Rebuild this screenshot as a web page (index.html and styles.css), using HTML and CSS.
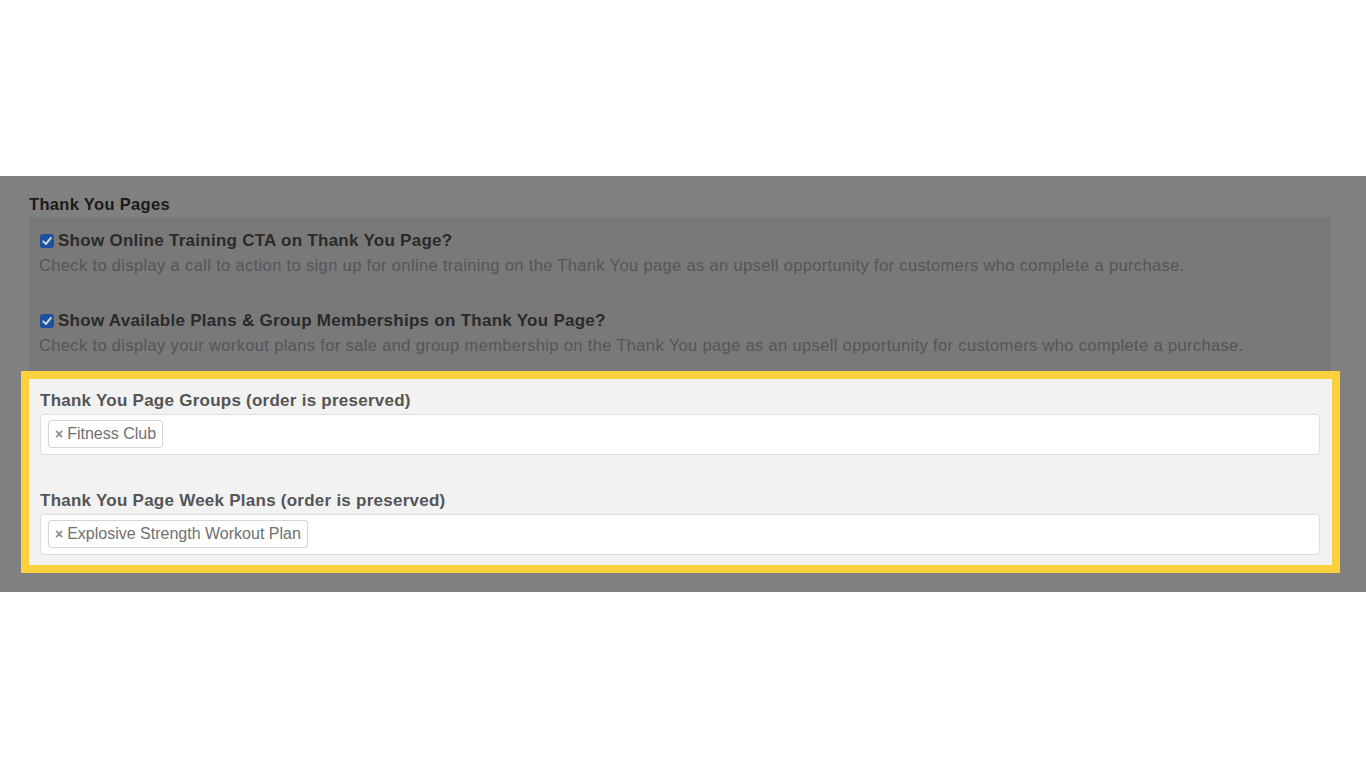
FILE: index.html
```html
<!DOCTYPE html>
<html lang="en">
<head>
<meta charset="utf-8">
<title>Thank You Pages</title>
<link rel="stylesheet" href="styles.css">
</head>
<body>
<div class="top-space"></div>
<section class="band">
  <h2 class="section-title">Thank You Pages</h2>
  <div class="panel">
    <div class="option">
      <div class="option-label">
        <span class="checkbox"><svg viewBox="0 0 14 14" width="14" height="14"><path d="M3.2 7.4 L5.9 10 L10.9 3.9" fill="none" stroke="#cfd3da" stroke-width="2" stroke-linecap="round" stroke-linejoin="round"/></svg></span>
        <span>Show Online Training CTA on Thank You Page?</span>
      </div>
      <div class="option-desc">Check to display a call to action to sign up for online training on the Thank You page as an upsell opportunity for customers who complete a purchase.</div>
    </div>
    <div class="option">
      <div class="option-label">
        <span class="checkbox"><svg viewBox="0 0 14 14" width="14" height="14"><path d="M3.2 7.4 L5.9 10 L10.9 3.9" fill="none" stroke="#cfd3da" stroke-width="2" stroke-linecap="round" stroke-linejoin="round"/></svg></span>
        <span>Show Available Plans &amp; Group Memberships on Thank You Page?</span>
      </div>
      <div class="option-desc">Check to display your workout plans for sale and group membership on the Thank You page as an upsell opportunity for customers who complete a purchase.</div>
    </div>
  </div>
  <div class="highlight">
    <div class="field">
      <div class="field-label">Thank You Page Groups (order is preserved)</div>
      <div class="multi-select">
        <span class="chip"><span class="chip-remove">×</span>Fitness Club</span>
      </div>
    </div>
    <div class="field">
      <div class="field-label">Thank You Page Week Plans (order is preserved)</div>
      <div class="multi-select">
        <span class="chip"><span class="chip-remove">×</span>Explosive Strength Workout Plan</span>
      </div>
    </div>
  </div>
</section>
</body>
</html>
```

FILE: styles.css
```css
html, body {
  margin: 0;
  padding: 0;
  background: #ffffff;
  font-family: "Liberation Sans", Arial, Helvetica, sans-serif;
}

.top-space {
  height: 176px;
}

.band {
  background: #808080;
  height: 416px;
  box-sizing: border-box;
  padding: 18px 0 0 29px;
}

.section-title {
  margin: 0 0 3px 0;
  font-size: 16.5px;
  letter-spacing: 0.33px;
  line-height: 20px;
  font-weight: bold;
  color: #1a1a1a;
}

.panel {
  width: 1302px;
  box-sizing: border-box;
  background: #797979;
  border-radius: 4px 4px 0 0;
  padding: 13px 10px 23px 10px;
}

.option + .option {
  margin-top: 34px;
}

.option-label {
  display: flex;
  align-items: center;
  font-size: 17px;
  letter-spacing: 0.27px;
  line-height: 22px;
  font-weight: bold;
  color: #2a2a2a;
}

.checkbox {
  width: 14px;
  height: 14px;
  margin: 0 4px 0 1px;
  border-radius: 3px;
  background: #1f4f9f;
  display: flex;
  flex: none;
}

.option-desc {
  margin-top: 2px;
  font-size: 16.5px;
  letter-spacing: 0.35px;
  line-height: 22px;
  color: #555555;
}

.highlight {
  width: 1303px;
  box-sizing: border-box;
  background: #f2f2f2;
  outline: 8px solid #fdd13d;
  padding: 11px 12px 10px 11px;
}

.field + .field {
  margin-top: 35px;
}

.field-label {
  font-size: 17px;
  letter-spacing: 0.25px;
  line-height: 22px;
  font-weight: bold;
  color: #555555;
  margin-bottom: 2px;
}

.multi-select {
  height: 41px;
  box-sizing: border-box;
  background: #ffffff;
  border: 1px solid #dedede;
  border-radius: 4px;
  padding: 5px 7px;
  display: flex;
  align-items: flex-start;
}

.chip {
  display: inline-flex;
  align-items: center;
  height: 28px;
  box-sizing: border-box;
  border: 1px solid #d6d6d6;
  border-radius: 3px;
  background: #ffffff;
  padding: 0 6px 0 6px;
  font-size: 16px;
  color: #707070;
}

.chip-remove {
  font-size: 14px;
  font-weight: bold;
  color: #8a8a8a;
  margin-right: 4px;
}
```
